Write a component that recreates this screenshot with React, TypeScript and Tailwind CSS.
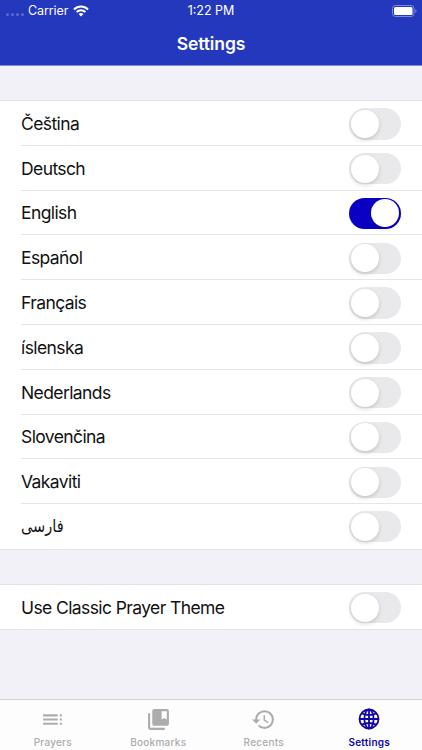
import { useState } from "react";
import { MdCollectionsBookmark, MdHistory, MdToc } from "react-icons/md";

const languages = [
  "Čeština",
  "Deutsch",
  "English",
  "Español",
  "Français",
  "íslenska",
  "Nederlands",
  "Slovenčina",
  "Vakaviti",
  "فارسی",
];

function Toggle({ label, on, onChange }: { label: string; on: boolean; onChange: () => void }) {
  return (
    <button
      type="button"
      role="switch"
      aria-checked={on}
      aria-label={label}
      onClick={onChange}
      className={`flex h-[31.5px] w-[52px] shrink-0 items-center rounded-full p-[2px] ${on ? "justify-end bg-[#0900c3]" : "justify-start bg-[#e9e9eb]"}`}
    >
      <span className="h-7 w-7 rounded-full bg-white shadow-[0_2px_4px_rgba(0,0,0,0.16)]" />
    </button>
  );
}

function StatusBar() {
  return (
    <div className="grid h-[21px] grid-cols-3 items-center text-[12.5px] text-white">
      <div className="flex items-center pl-[6px]">
        <div className="mt-[7px] mr-1 flex gap-[2px]">
          {[0, 1, 2, 3].map((dot) => (
            <span key={dot} className="h-[3px] w-[3px] rounded-full bg-[#5c69cc]" />
          ))}
        </div>
        <span className="pt-px tracking-[-0.1px]">Carrier</span>
        <svg className="ml-[5px] h-[12px] w-4" viewBox="0 0 16 12" fill="none" stroke="currentColor" strokeWidth="2.1">
          <path d="M1 4.4C5 .5 11 .5 15 4.4" />
          <path d="M3.6 7.1C6.2 4.7 9.8 4.7 12.4 7.1" />
          <path d="M5.6 9.1Q8 7.1 10.4 9.1L8 11.5Z" fill="currentColor" stroke="none" />
        </svg>
      </div>
      <span className="pt-px text-center">1:22 PM</span>
      <div className="flex justify-end pr-[5px]">
        <svg className="h-3 w-[25px]" viewBox="0 0 25 12" fill="none">
          <rect x=".5" y=".5" width="21.5" height="11" rx="3" stroke="#7f89dc" />
          <rect x="2" y="2" width="18.5" height="8" rx="1.5" fill="white" />
          <path d="M23.3 4.2C25 4.6 25 7.4 23.3 7.8Z" fill="#7f89dc" />
        </svg>
      </div>
    </div>
  );
}

function GlobeIcon() {
  return (
    <svg className="h-[22px] w-[22px]" viewBox="0 0 22 22" fill="none" stroke="currentColor" strokeWidth="1.8">
      <circle cx="11" cy="11" r="9.5" />
      <ellipse cx="11" cy="11" rx="4.6" ry="9.5" />
      <path d="M11 1.5v19M1.5 11h19M3.6 5.3C7.8 7.6 14.2 7.6 18.4 5.3M3.6 16.7C7.8 14.4 14.2 14.4 18.4 16.7" />
    </svg>
  );
}

const tabs = [
  { name: "Prayers", icon: <MdToc className="h-[25px] w-[25px]" /> },
  { name: "Bookmarks", icon: <MdCollectionsBookmark className="h-[25px] w-[25px]" /> },
  { name: "Recents", icon: <MdHistory className="h-[25px] w-[25px]" /> },
  { name: "Settings", icon: <GlobeIcon /> },
];

export default function App() {
  const [enabled, setEnabled] = useState<string[]>(["English"]);
  const [classicTheme, setClassicTheme] = useState(false);

  const toggleLanguage = (name: string) => {
    setEnabled((list) => (list.includes(name) ? list.filter((item) => item !== name) : [...list, name]));
  };

  return (
    <div className="flex h-[750px] w-[422px] flex-col overflow-hidden bg-[#f2f1f7] font-['Inter','Noto_Sans','DejaVu_Sans',sans-serif]">
      <header className="h-[66px] shrink-0 border-b border-[#8088d9] bg-[#2438bd]">
        <StatusBar />
        <h1 className="h-11 text-center text-[17.5px] leading-[45px] font-semibold tracking-[-0.1px] text-white">Settings</h1>
      </header>

      <main className="flex-1">
        {/* Languages */}
        <section className="mt-[35px] h-[448px] bg-white shadow-[0_-1px_0_#e2e1e7,0_1px_0_#e2e1e7]">
          {languages.map((name) => (
            <div key={name} className="h-[44.8px] pl-[21px]">
              <div
                className={`flex h-full items-center justify-between pr-[21px] ${name === "فارسی" ? "" : "border-b border-[#e5e5e7] pt-[2px]"}`}
              >
                <span
                  className={
                    name === "فارسی"
                      ? "origin-left scale-x-[0.83] text-[17.5px] text-[#111]"
                      : "text-[17.5px] tracking-[-0.6px] text-[#111]"
                  }
                >
                  {name}
                </span>
                <Toggle label={name} on={enabled.includes(name)} onChange={() => toggleLanguage(name)} />
              </div>
            </div>
          ))}
        </section>

        {/* Theme */}
        <section className="mt-9 flex h-11 items-center justify-between bg-white pt-px pr-[21px] pl-[21px] shadow-[0_-1px_0_#e2e1e7,0_1px_0_#e2e1e7]">
          <span className="pt-px text-[17.5px] tracking-[-0.6px] text-[#111]">Use Classic Prayer Theme</span>
          <Toggle label="Use Classic Prayer Theme" on={classicTheme} onChange={() => setClassicTheme((v) => !v)} />
        </section>
      </main>

      <nav className="grid h-[51px] shrink-0 grid-cols-4 border-t border-[#d2d1d7] bg-[#fdfdfd]">
        {tabs.map(({ name, icon }) => (
          <a
            key={name}
            href="#"
            className={`flex flex-col items-center pt-[7px] ${name === "Settings" ? "font-semibold text-[#1005a8]" : "font-medium text-[#acacac]"}`}
          >
            <span className="flex h-6 items-center justify-center">{icon}</span>
            <span className="mt-[4px] text-[10px] leading-[15px] tracking-[0.25px]">{name}</span>
          </a>
        ))}
      </nav>
    </div>
  );
}
